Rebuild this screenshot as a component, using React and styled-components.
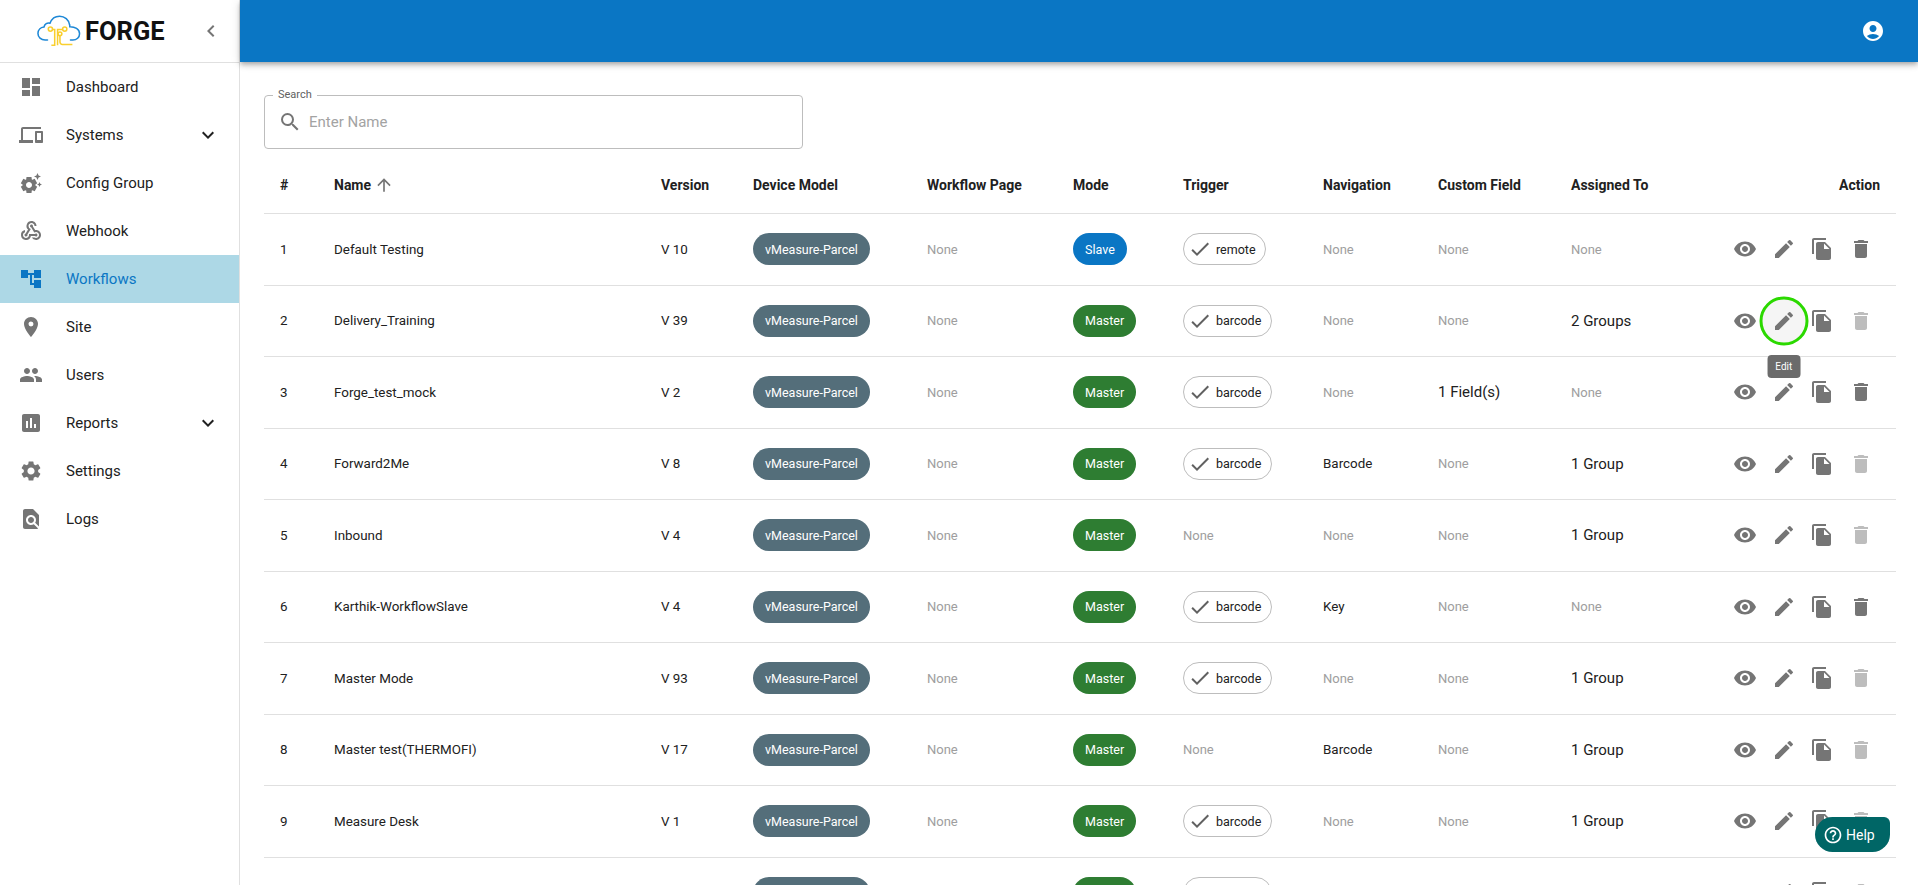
import React from 'react';
import styled, { createGlobalStyle } from 'styled-components';
import {
    MdDashboard, MdDevices, MdSettingsSuggest, MdWebhook, MdAccountTree, MdLocationOn, MdPeople,
    MdAssessment, MdSettings, MdFindInPage, MdExpandMore, MdChevronLeft, MdAccountCircle, MdSearch,
    MdArrowUpward, MdCheck, MdVisibility, MdEdit, MdFileCopy, MdDelete, MdHelpOutline,
} from 'react-icons/md';

const navItems = [
    { label: 'Dashboard', icon: MdDashboard },
    { label: 'Systems', icon: MdDevices, more: true },
    { label: 'Config Group', icon: MdSettingsSuggest },
    { label: 'Webhook', icon: MdWebhook },
    { label: 'Workflows', icon: MdAccountTree, active: true },
    { label: 'Site', icon: MdLocationOn },
    { label: 'Users', icon: MdPeople },
    { label: 'Reports', icon: MdAssessment, more: true },
    { label: 'Settings', icon: MdSettings },
    { label: 'Logs', icon: MdFindInPage },
];

const columns = [
    { title: '#', width: 54 },
    { title: 'Name', width: 327, sorted: true },
    { title: 'Version', width: 92 },
    { title: 'Device Model', width: 174 },
    { title: 'Workflow Page', width: 146 },
    { title: 'Mode', width: 110 },
    { title: 'Trigger', width: 140 },
    { title: 'Navigation', width: 115 },
    { title: 'Custom Field', width: 133 },
    { title: 'Assigned To', width: 144 },
    { title: 'Action', width: 197, right: true },
];

const rows = [
    { name: 'Default Testing', version: 'V 10', mode: 'Slave', trigger: 'remote', nav: null, custom: null, assigned: null },
    { name: 'Delivery_Training', version: 'V 39', mode: 'Master', trigger: 'barcode', nav: null, custom: null, assigned: '2 Groups', hovered: true },
    { name: 'Forge_test_mock', version: 'V 2', mode: 'Master', trigger: 'barcode', nav: null, custom: '1 Field(s)', assigned: null },
    { name: 'Forward2Me', version: 'V 8', mode: 'Master', trigger: 'barcode', nav: 'Barcode', custom: null, assigned: '1 Group' },
    { name: 'Inbound', version: 'V 4', mode: 'Master', trigger: null, nav: null, custom: null, assigned: '1 Group' },
    { name: 'Karthik-WorkflowSlave', version: 'V 4', mode: 'Master', trigger: 'barcode', nav: 'Key', custom: null, assigned: null },
    { name: 'Master Mode', version: 'V 93', mode: 'Master', trigger: 'barcode', nav: null, custom: null, assigned: '1 Group' },
    { name: 'Master test(THERMOFI)', version: 'V 17', mode: 'Master', trigger: null, nav: 'Barcode', custom: null, assigned: '1 Group' },
    { name: 'Measure Desk', version: 'V 1', mode: 'Master', trigger: 'barcode', nav: null, custom: null, assigned: '1 Group' },
    { name: 'Measure Test', version: 'V 1', mode: 'Master', trigger: 'barcode', nav: null, custom: null, assigned: '1 Group' },
];

function Logo() {
    return (
        <svg width="44" height="34" viewBox="0 0 46 34" fill="none">
            <path d="M11 26.500H8.500C4.200 26.500 1 23.400 1 19.600c0-3.600 2.700-6.400 6.300-6.800C8 9.600 10.800 8 13.600 8.800 15.300 4.200 19.400 1.500 23.600 1.500c5.400 0 9.700 3.700 10.500 9 .2 .9 .2 1.500 .2 2 5.200-.1 10.200 2.500 10.200 7.300 0 3.700-3 6.700-7 6.700h-2.500" stroke="#1e88d6" strokeWidth="1.600" strokeLinecap="round" />
            <g stroke="#f9cf2e" strokeWidth="1.600">
                <circle cx="14" cy="15" r="2.200" />
                <circle cx="29" cy="15" r="2.200" />
                <circle cx="24" cy="20" r="2" />
                <path d="M16.200 15.500h2.300v16.500h-3.500M26.800 15.500h-5.300v16.500M24 22v6.500a2.500 2.500 0 0 0 2.500 2.500H37" />
            </g>
        </svg>
    );
}

function App() {
    return (
        <Page>
            <GlobalStyle />
            <Sidebar>
                <Brand>
                    <Logo />
                    <BrandName>FORGE</BrandName>
                    <Collapse><MdChevronLeft size={24} /></Collapse>
                </Brand>
                <nav>
                    {navItems.map(({ label, icon: Icon, more, active }) => (
                        <NavItem key={label} $active={active}>
                            <NavIcon $active={active}><Icon size={24} /></NavIcon>
                            <NavLabel>{label}</NavLabel>
                            {more && <NavMore><MdExpandMore size={24} /></NavMore>}
                        </NavItem>
                    ))}
                </nav>
            </Sidebar>
            <Main>
                <Header>
                    <MdAccountCircle size={24} color="#fff" />
                </Header>
                <Content>
                    <SearchBox>
                        <SearchLabel>Search</SearchLabel>
                        <MdSearch size={24} color="#757575" />
                        <SearchInput placeholder="Enter Name" />
                    </SearchBox>
                    <Table>
                        <colgroup>
                            {columns.map((c) => <col key={c.title} width={c.width} />)}
                        </colgroup>
                        <thead>
                            <tr>
                                {columns.map((c) => (
                                    <Th key={c.title} $right={c.right}>
                                        {c.title}
                                        {c.sorted && <SortIcon><MdArrowUpward size={20} /></SortIcon>}
                                    </Th>
                                ))}
                            </tr>
                        </thead>
                        <tbody>
                            {rows.map((row, i) => (
                                <tr key={row.name}>
                                    <Td>{i + 1}</Td>
                                    <Td>{row.name}</Td>
                                    <Td>{row.version}</Td>
                                    <Td><DeviceChip>vMeasure-Parcel</DeviceChip></Td>
                                    <Td><None>None</None></Td>
                                    <Td><ModeChip $mode={row.mode}>{row.mode}</ModeChip></Td>
                                    <Td>
                                        {row.trigger
                                            ? <TriggerChip><MdCheck size={24} color="#616161" />{row.trigger}</TriggerChip>
                                            : <None>None</None>}
                                    </Td>
                                    <Td>{row.nav || <None>None</None>}</Td>
                                    <Td>{row.custom ? <Count>{row.custom}</Count> : <None>None</None>}</Td>
                                    <Td>{row.assigned ? <Count>{row.assigned}</Count> : <None>None</None>}</Td>
                                    <ActionCell>
                                        <Actions>
                                            <ActionButton><MdVisibility size={24} /></ActionButton>
                                            <ActionButton $hovered={row.hovered}>
                                                <MdEdit size={24} />
                                                {row.hovered && <Tooltip>Edit</Tooltip>}
                                            </ActionButton>
                                            <ActionButton><MdFileCopy size={24} /></ActionButton>
                                            <ActionButton $disabled={!!row.assigned}><MdDelete size={24} /></ActionButton>
                                        </Actions>
                                    </ActionCell>
                                </tr>
                            ))}
                        </tbody>
                    </Table>
                </Content>
            </Main>
            <HelpButton><MdHelpOutline size={20} />Help</HelpButton>
        </Page>
    );
}

const GlobalStyle = createGlobalStyle`
html, body {
    margin: 0;
    padding: 0;
    background: #fff;
    font-family: Roboto, "Liberation Sans", sans-serif;
}
`;

const Page = styled.div`
display: flex;
height: 100vh;
overflow: hidden;
color: #212121;
`;

const Sidebar = styled.aside`
flex: 0 0 240px;
box-sizing: border-box;
border-right: 1px solid #e0e0e0;
`;

const Brand = styled.div`
display: flex;
align-items: center;
height: 63px;
box-sizing: border-box;
padding-left: 37px;
border-bottom: 1px solid #e0e0e0;
`;

const BrandName = styled.div`
margin-left: 4px;
font-size: 25.5px;
font-weight: 700;
color: #111;
`;

const Collapse = styled.div`
display: flex;
margin-left: auto;
margin-right: 16px;
color: #757575;
`;

const NavItem = styled.div`
display: flex;
align-items: center;
height: 48px;
padding: 0 18px 0 19px;
background: ${(p) => (p.$active ? '#add8e6' : 'transparent')};
color: ${(p) => (p.$active ? '#0a76c4' : '#212121')};
`;

const NavIcon = styled.div`
display: flex;
width: 47px;
color: ${(p) => (p.$active ? '#0a76c4' : '#757575')};
`;

const NavLabel = styled.span`
flex: 1;
font-size: 15px;
`;

const NavMore = styled.div`
display: flex;
margin-right: 1px;
`;

const Main = styled.main`
flex: 1;
min-width: 0;
`;

const Header = styled.header`
display: flex;
align-items: center;
justify-content: flex-end;
height: 62px;
padding-right: 33px;
background: #0a76c4;
box-shadow: 0 2px 4px -1px rgba(0,0,0,.2), 0 4px 5px rgba(0,0,0,.14), 0 1px 10px rgba(0,0,0,.12);
`;

const Content = styled.div`
padding: 33px 22px 0 24px;
`;

const SearchBox = styled.label`
position: relative;
display: flex;
align-items: center;
gap: 3px;
box-sizing: border-box;
width: 539px;
height: 54px;
padding: 0 14px 0 13px;
border: 1px solid #bdbdbd;
border-radius: 4px;
`;

const SearchLabel = styled.span`
position: absolute;
top: -8px;
left: 8px;
padding: 0 5px;
background: #fff;
font-size: 11px;
color: #616161;
`;

const SearchInput = styled.input`
flex: 1;
border: none;
outline: none;
padding: 0 0 0 4px;
font-family: inherit;
font-size: 15px;
&::placeholder {
    color: #a3a3a3;
    opacity: 1;
}
`;

const Table = styled.table`
width: 1632px;
margin-top: 8px;
border-collapse: collapse;
table-layout: fixed;
`;

const Th = styled.th`
height: 56px;
padding: 0 ${(p) => (p.$right ? '16px' : '0')} 0 ${(p) => (p.$right ? '0' : '16px')};
border-bottom: 1px solid #e0e0e0;
font-size: 14px;
font-weight: 700;
text-align: ${(p) => (p.$right ? 'right' : 'left')};
white-space: nowrap;
`;

const SortIcon = styled.span`
display: inline-flex;
margin-left: 3px;
vertical-align: -5px;
color: #757575;
`;

const Td = styled.td`
height: 71.5px;
box-sizing: border-box;
padding: 0 0 0 16px;
border-bottom: 1px solid #e0e0e0;
font-size: 13.4px;
white-space: nowrap;
`;

const ActionCell = styled(Td)`
padding: 0 15.5px 0 0;
`;

const None = styled.span`
color: #9e9e9e;
font-size: 13px;
`;

const Count = styled.span`
font-size: 15px;
`;

const Chip = styled.span`
display: inline-flex;
align-items: center;
box-sizing: border-box;
height: 32px;
border-radius: 16px;
font-size: 12.5px;
vertical-align: middle;
`;

const DeviceChip = styled(Chip)`
padding: 0 12px;
background: #546e7a;
color: #fff;
`;

const ModeChip = styled(Chip)`
padding: 0 12px;
background: ${(p) => (p.$mode === 'Slave' ? '#0a76c4' : '#2e7d32')};
color: #fff;
`;

const TriggerChip = styled(Chip)`
gap: 4px;
padding: 0 9.5px 0 4px;
border: 1px solid #bdbdbd;
`;

const Actions = styled.div`
display: flex;
justify-content: flex-end;
`;

const ActionButton = styled.div`
position: relative;
display: flex;
align-items: center;
justify-content: center;
flex: 0 0 38.7px;
height: 40px;
color: ${(p) => (p.$disabled ? '#bdbdbd' : '#757575')};
${(p) => p.$hovered && `
    &::before {
        content: '';
        position: absolute;
        left: 50%;
        top: 50%;
        width: 43px;
        height: 43px;
        transform: translate(-50%, -50%);
        background: #f5f5f5;
        border: 3px solid #2bd900;
        border-radius: 50%;
    }
    svg { position: relative; }
`}
`;

const Tooltip = styled.div`
position: absolute;
top: 54px;
left: 50%;
transform: translateX(-50%);
padding: 0 8px;
height: 23px;
line-height: 23px;
border-radius: 4px;
background: #6b6b6b;
color: #fff;
font-size: 10px;
z-index: 2;
`;

const HelpButton = styled.div`
position: fixed;
right: 28px;
bottom: 33px;
display: flex;
align-items: center;
gap: 3px;
box-sizing: border-box;
width: 75px;
height: 35px;
padding-left: 8px;
background: #006666;
color: #fff;
font-size: 14px;
border-radius: 18px 6px 18px 18px;
z-index: 5;
`;

export default App;
